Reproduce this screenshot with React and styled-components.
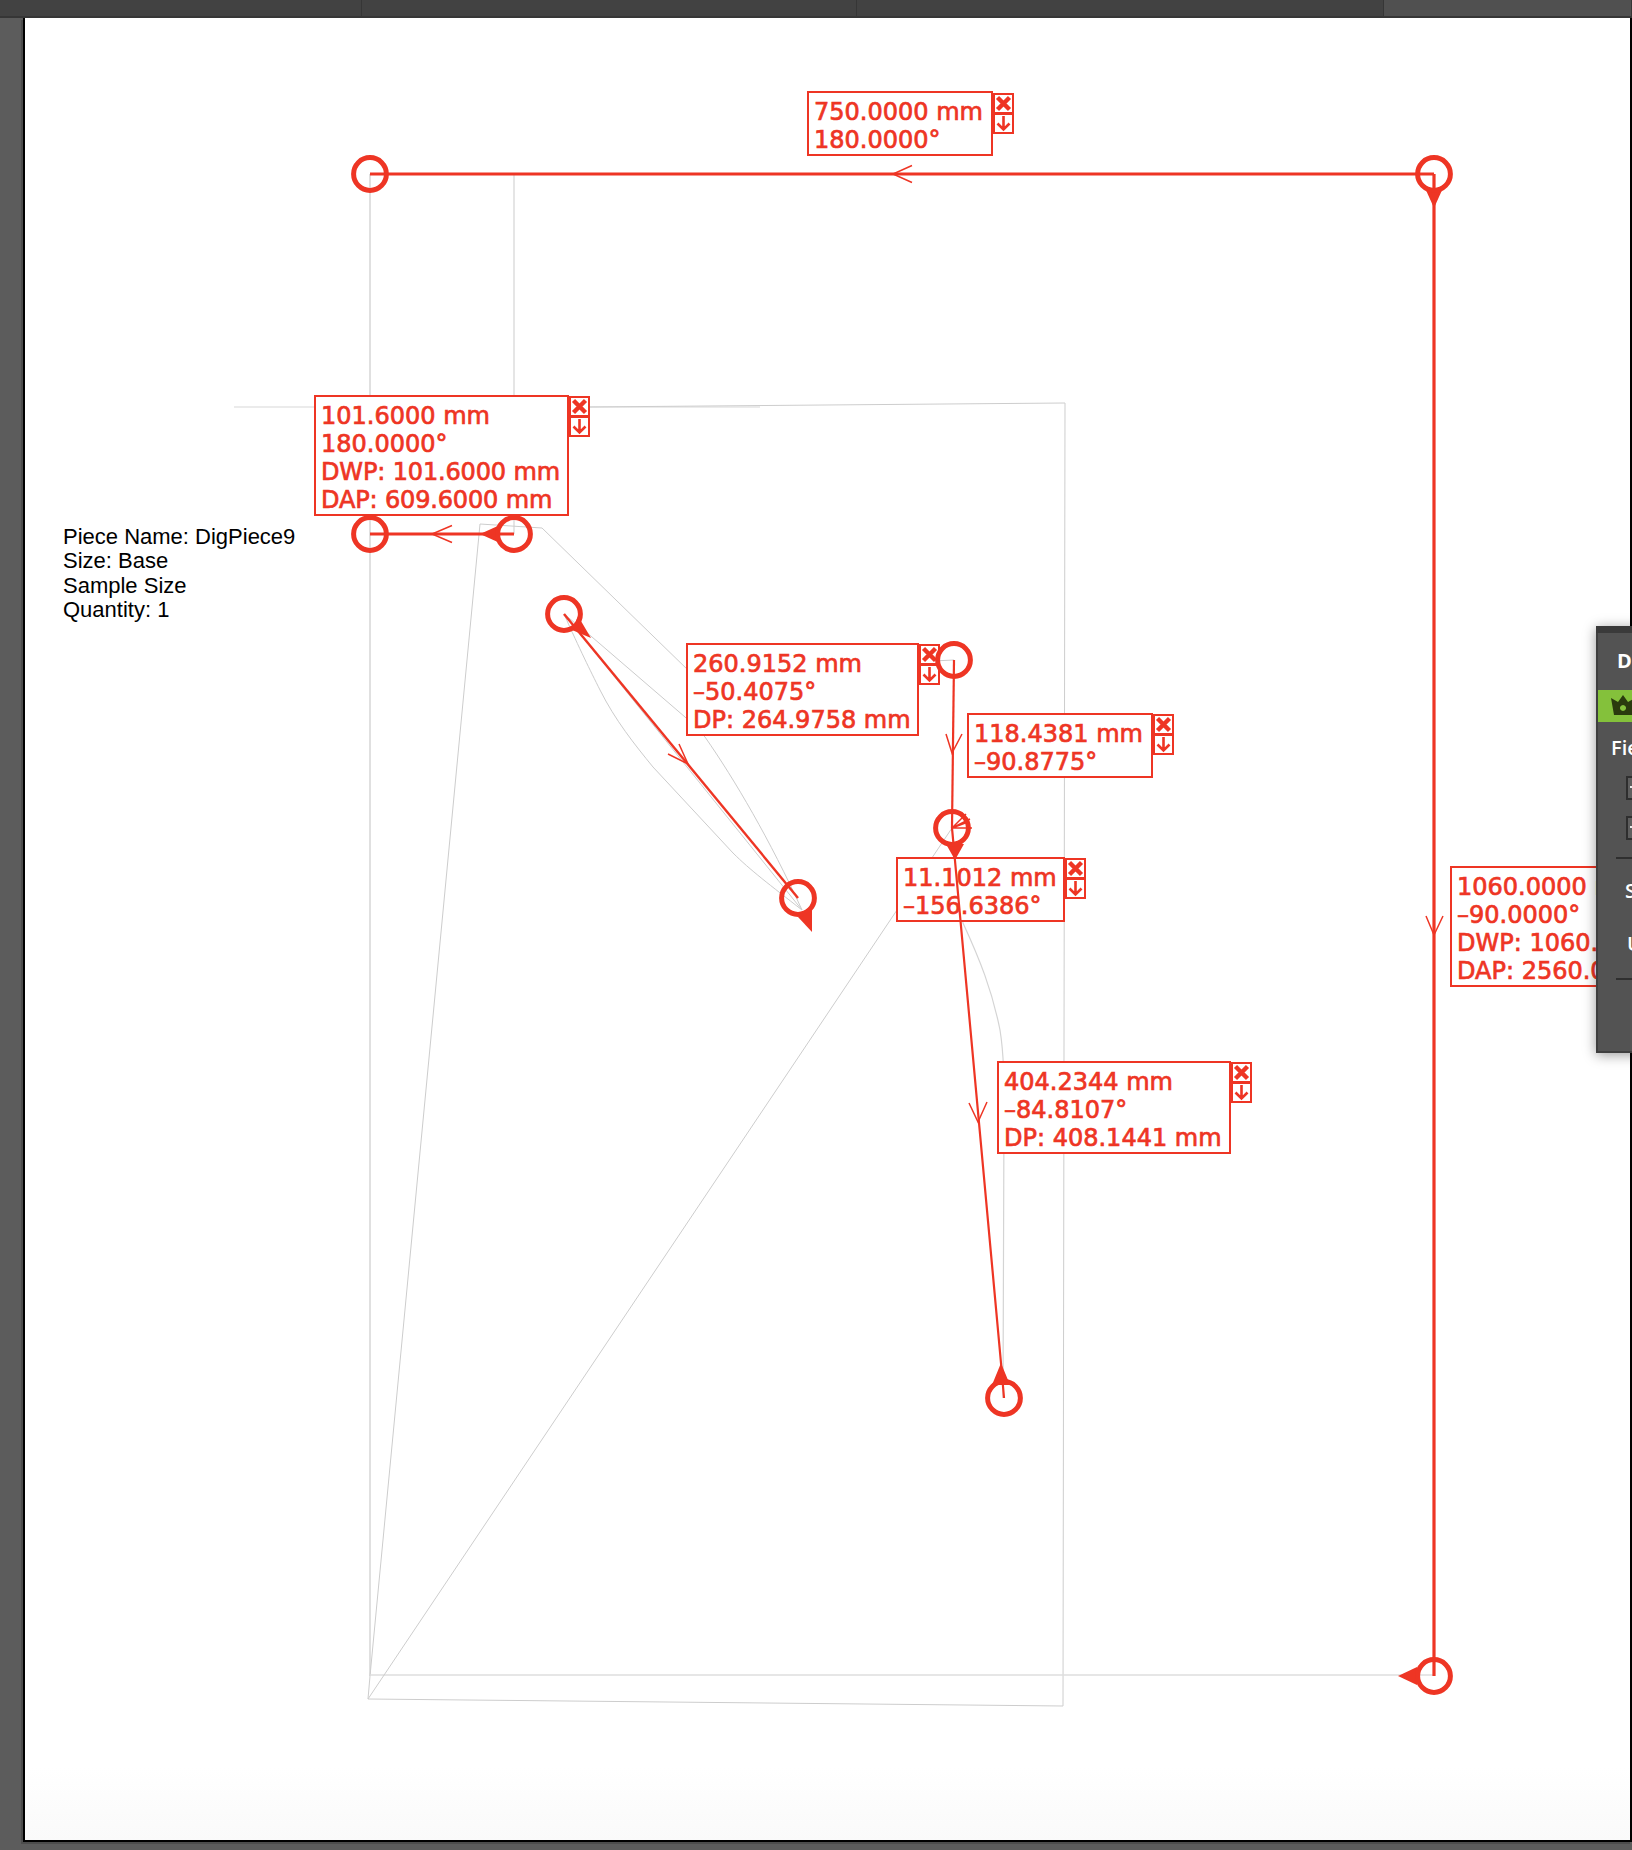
import React from "react";
import styled, { createGlobalStyle } from "styled-components";

const RED = "#ee3524";
const ORIGIN_X = 25;
const ORIGIN_Y = 18;

const Global = createGlobalStyle`
  html, body { margin: 0; padding: 0; background: #5c5c5c; }
  #root { width: 1632px; height: 1850px; overflow: hidden; }
`;

const Page = styled.div`
  position: relative;
  display: flex;
  flex-direction: column;
  width: 1632px;
  height: 1850px;
  overflow: hidden;
  background: #5c5c5c;
`;

const TopBar = styled.div`
  display: grid;
  grid-template-columns: 362px 495px 527px 1fr;
  height: 16px;
  flex: none;
  border-bottom: 2px solid #363636;
`;

const Tab = styled.div`
  background: ${(p) => (p.$active ? "#505050" : "#424242")};
  border-right: 1px solid #363636;
`;

const Workspace = styled.div`
  flex: 1;
  display: flex;
  padding: 0 0 8px 23px;
  min-height: 0;
`;

const Sheet = styled.div`
  position: relative;
  flex: 1;
  border-left: 2px solid #000;
  border-right: 2px solid #000;
  border-bottom: 2px solid #000;
  background: linear-gradient(#ffffff 96%, #fafafa 100%);
  box-shadow: -2px 2px 0 #4c4c4c;
`;

const Layer = styled.svg`
  position: absolute;
  left: 0;
  top: 0;
  width: 1605px;
  height: 1822px;
  overflow: visible;
  z-index: ${(p) => p.$z};
  pointer-events: none;
`;

const PieceInfo = styled.div`
  position: absolute;
  left: ${63 - ORIGIN_X}px;
  top: ${525 - ORIGIN_Y}px;
  font-family: "Liberation Sans", Arial, sans-serif;
  font-size: 22px;
  line-height: 24.4px;
  color: #000;
  white-space: nowrap;
  z-index: 1;
`;

const Dimension = styled.div`
  position: absolute;
  left: ${(p) => p.$x - ORIGIN_X}px;
  top: ${(p) => p.$y - ORIGIN_Y}px;
  display: flex;
  align-items: flex-start;
  z-index: 2;
`;

const DimBox = styled.div`
  box-sizing: border-box;
  width: ${(p) => (p.$width ? `${p.$width}px` : "auto")};
  padding: 5px 8px 0 5px;
  border: 2px solid ${RED};
  background: #fff;
  color: ${RED};
  font-family: "DejaVu Sans", sans-serif;
  font-size: 24px;
  line-height: 28px;
  white-space: nowrap;
  -webkit-text-stroke: 0.7px ${RED};
`;

const DimLine = styled.div`
  letter-spacing: ${(p) => (p.$tight ? "-0.15px" : "0")};
`;

const ButtonStack = styled.div`
  display: flex;
  flex-direction: column;
  margin-top: ${(p) => p.$offset}px;
`;

const MiniButton = styled.div`
  box-sizing: border-box;
  width: 21px;
  height: 21px;
  margin-top: ${(p) => (p.$second ? "-1px" : "0")};
  border: 2px solid ${RED};
  background: #fff;
  display: flex;
  align-items: center;
  justify-content: center;
`;

const Panel = styled.div`
  position: absolute;
  left: 1596px;
  top: 626px;
  width: 320px;
  height: 427px;
  box-sizing: border-box;
  border: 2px solid #3f3f3f;
  border-top: 0;
  background: #535353;
  box-shadow: 0 2px 12px rgba(0, 0, 0, 0.4);
  z-index: 5;
  color: #ffffff;
  font-family: "Open Sans", "DejaVu Sans", sans-serif;
  font-size: 20px;
  font-weight: 600;
`;

const PanelGrip = styled.div`
  height: 7px;
  margin: 0 -2px;
  background: #3a3a3a;
`;

const PanelTitle = styled.div`
  height: 55px;
  padding: 0 0 2px 19px;
  display: flex;
  align-items: center;
  font-weight: 700;
  font-size: 20px;
  color: #fff;
`;

const PremiumRow = styled.div`
  height: 32px;
  background: #84c13b;
  padding-left: 13px;
  display: flex;
  align-items: center;
`;

const SectionLabel = styled.div`
  padding-left: ${(p) => p.$indent}px;
  height: ${(p) => p.$h}px;
  display: flex;
  align-items: center;
`;

const CheckRow = styled.div`
  display: flex;
  flex-direction: column;
  gap: 16px;
  padding: 4px 0 0 28px;
`;

const Check = styled.div`
  box-sizing: border-box;
  width: 24px;
  height: 24px;
  border: 2px solid #2e2e2e;
  background: #5e5e5e;
  position: relative;
  &::after {
    content: "";
    position: absolute;
    left: 2px;
    top: 8px;
    width: 6px;
    height: 2px;
    background: #e8e8e8;
  }
`;

const Rule = styled.div`
  height: 2px;
  margin: ${(p) => p.$m};
  background: #2f2f2f;
`;

const labels = [
  { x: 807, y: 91, offset: 2, lines: ["750.0000 mm", "180.0000°"] },
  { x: 314, y: 395, width: 255, lines: ["101.6000 mm", "180.0000°", "DWP: 101.6000 mm", "DAP: 609.6000 mm"] },
  { x: 686, y: 643, width: 233, lines: ["260.9152 mm", "–50.4075°", "DP: 264.9758 mm"] },
  { x: 967, y: 713, width: 186, lines: ["118.4381 mm", "–90.8775°"] },
  { x: 896, y: 857, width: 169, lines: ["11.1012 mm", "–156.6386°"] },
  { x: 997, y: 1061, width: 234, lines: ["404.2344 mm", "–84.8107°", "DP: 408.1441 mm"] },
  { x: 1450, y: 866, lines: ["1060.0000 mm", "–90.0000°", "DWP: 1060.0000 mm", "DAP: 2560.0000 mm"], noButtons: true },
];

const grayLines = [
  { d: "M370 174L370 1676", c: "#d6d6d6", w: 1.5 },
  { d: "M514 174L514 534", c: "#dcdcdc", w: 1.5 },
  { d: "M234 407L760 407", c: "#d8d8d8", w: 1.2 },
  { d: "M586 407L1065 403L1063 1706L368 1699L370 1676L480 524L542 528L690 672L954 660", c: "#cdcdcd", w: 1 },
  { d: "M370 1675L1434 1675", c: "#dedede", w: 1.5 },
  { d: "M564 614L592 637L685 717L705 737C735 780 770 840 802 910", c: "#cccccc", w: 1 },
  { d: "M564 614C580 650 590 670 600 690C615 720 635 745 653 767L733 853C750 870 770 885 802 910", c: "#cccccc", w: 1 },
  { d: "M564 614L802 910", c: "#cccccc", w: 1 },
  { d: "M368 1699L952 828", c: "#cdcdcd", w: 1 },
  { d: "M952 828L963 923C980 960 992 990 1000 1030C1004 1055 1004 1080 1004 1110L1003 1398", c: "#d4d4d4", w: 1.2 },
];

const nodes = [
  [370, 174], [1434, 174], [1434, 1676], [370, 534], [514, 534],
  [564, 614], [798, 898], [954, 660], [952, 828], [1004, 1398],
];

const redLines = [
  { d: "M370 174L1434 174", w: 3 },
  { d: "M1434 174L1434 1676", w: 3.2 },
  { d: "M514 534L370 534", w: 3 },
  { d: "M564 614L798 898", w: 2.4 },
  { d: "M954 660L952 828", w: 2.2 },
  { d: "M952 828L1001 1363L1004 1398", w: 2.2 },
  { d: "M952 828L966 814M952 828L970 819M952 828L968 822M952 828L972 828", w: 1.5 },
];

const openHeads = [
  "M912 165.5L893 174L912 182.5",
  "M1426 916L1434 935L1443 916",
  "M452 525.5L432 534L452 542.5",
  "M668 754L688 764L679 744",
  "M946 734L952 753L962 734",
  "M969 1103L978 1122L987 1102",
];

const solidHeads = [
  "1425,188 1443,188 1434,208",
  "1417,1667 1417,1685 1398,1676",
  "500,525 500,543 480,534",
  "578,616 591,638 572,630",
  "798,917 812,908 812,932",
  "946,844 964,844 955,860",
  "992,1385 1010,1385 1001,1363",
];

const CloseIcon = () => (
  <svg width="17" height="17" viewBox="0 0 17 17">
    <path d="M2.5 2.5L14.5 14.5M14.5 2.5L2.5 14.5" stroke={RED} strokeWidth="4.4" fill="none" />
  </svg>
);

const DownIcon = () => (
  <svg width="17" height="17" viewBox="0 0 17 17">
    <path d="M8.5 1L8.5 14M2.5 8.5L8.5 14.5L14.5 8.5" stroke={RED} strokeWidth="2.6" fill="none" />
  </svg>
);

const Crown = () => (
  <svg width="24" height="22" viewBox="0 0 24 22">
    <path
      d="M0 3L7 7L12 0L17 7L24 3L21 20H3ZM12 10a3 3 0 1 0 0.01 0Z"
      fill="#2a3a0e"
      fillRule="evenodd"
    />
  </svg>
);

const viewBox = `${ORIGIN_X} ${ORIGIN_Y} 1605 1822`;

export default function App() {
  return (
    <Page>
      <Global />
      <TopBar>
        <Tab />
        <Tab />
        <Tab />
        <Tab $active />
      </TopBar>
      <Workspace>
        <Sheet>
          <Layer $z={0} viewBox={viewBox}>
            {grayLines.map((l, i) => (
              <path key={i} d={l.d} stroke={l.c} strokeWidth={l.w} fill="none" />
            ))}
          </Layer>
          <PieceInfo>
            <div>Piece Name: DigPiece9</div>
            <div>Size: Base</div>
            <div>Sample Size</div>
            <div>Quantity: 1</div>
          </PieceInfo>
          {labels.map((l, i) => (
            <Dimension key={i} $x={l.x} $y={l.y}>
              <DimBox $width={l.width}>
                {l.lines.map((t) => (
                  <DimLine key={t} $tight={l.width === 255 && t.startsWith("D")}>{t}</DimLine>
                ))}
              </DimBox>
              {!l.noButtons && (
                <ButtonStack $offset={l.offset || 1}>
                  <MiniButton>
                    <CloseIcon />
                  </MiniButton>
                  <MiniButton $second>
                    <DownIcon />
                  </MiniButton>
                </ButtonStack>
              )}
            </Dimension>
          ))}
          <Layer $z={3} viewBox={viewBox}>
            {redLines.map((l, i) => (
              <path key={i} d={l.d} stroke={RED} strokeWidth={l.w} fill="none" />
            ))}
            {openHeads.map((d, i) => (
              <path key={i} d={d} stroke={RED} strokeWidth="1.5" fill="none" />
            ))}
            {solidHeads.map((p, i) => (
              <polygon key={i} points={p} fill={RED} />
            ))}
            {nodes.map(([x, y], i) => (
              <circle key={i} cx={x} cy={y} r="16.4" stroke={RED} strokeWidth="5" fill="none" />
            ))}
          </Layer>
        </Sheet>
      </Workspace>
      <Panel>
        <PanelGrip />
        <PanelTitle>Dimensions</PanelTitle>
        <PremiumRow>
          <Crown />
        </PremiumRow>
        <SectionLabel $indent={13} $h={50}>Fields</SectionLabel>
        <CheckRow>
          <Check />
          <Check />
        </CheckRow>
        <Rule $m="17px 0 0 18px" />
        <SectionLabel $indent={27} $h={62}>Show</SectionLabel>
        <SectionLabel $indent={29} $h={44}>Units</SectionLabel>
        <Rule $m="13px 0 0 18px" />
      </Panel>
    </Page>
  );
}
